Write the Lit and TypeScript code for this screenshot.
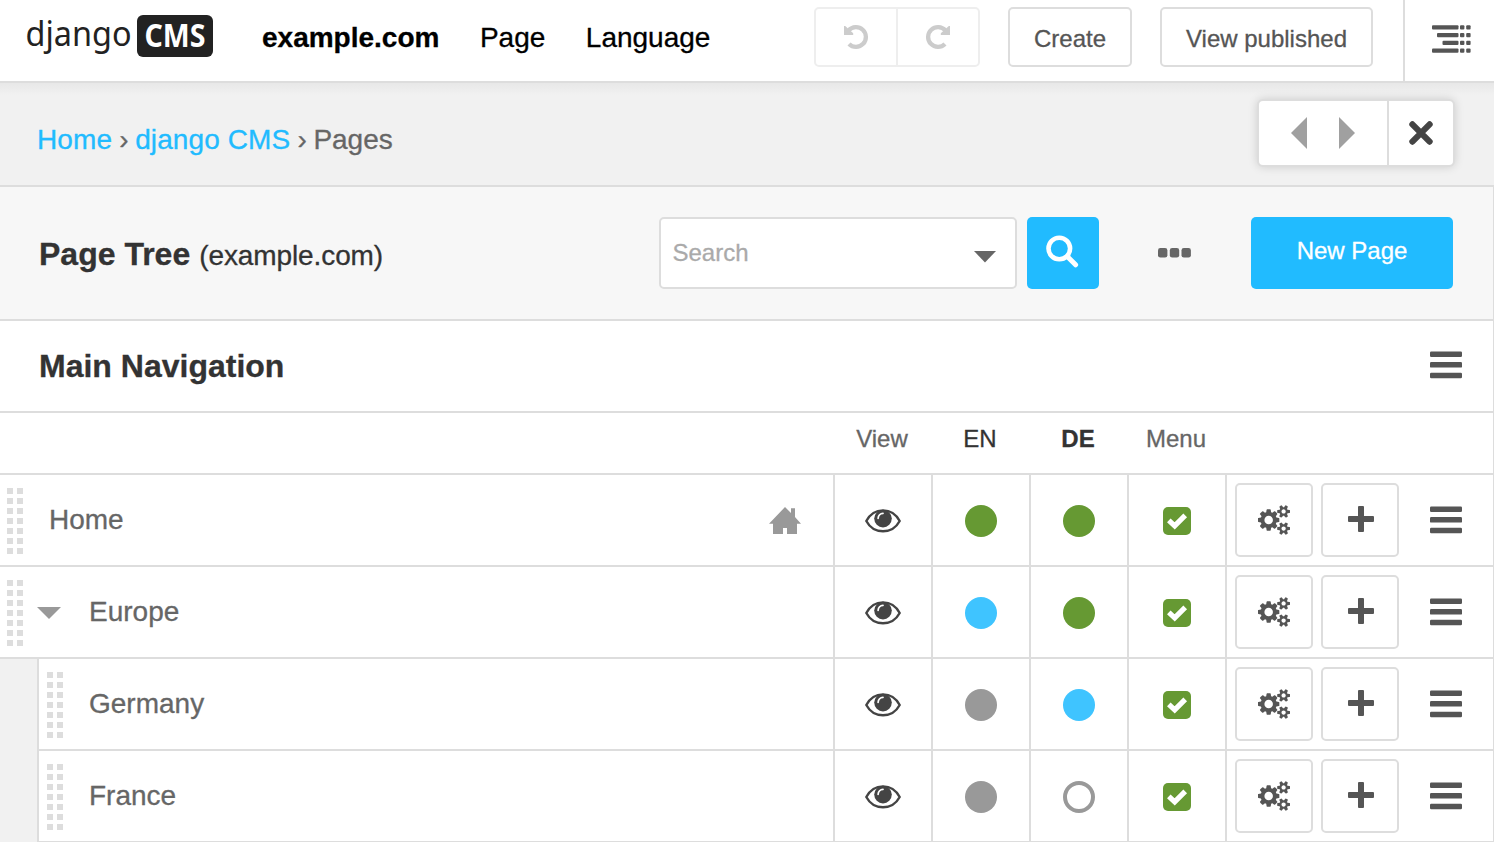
import { LitElement, html, css, svg } from "lit";
import { customElement, property } from "lit/decorators.js";

type Status = "published" | "dirty" | "unpublished" | "empty";

interface PageNode {
  title: string;
  level: number;
  home?: boolean;
  open?: boolean;
  en: Status;
  de: Status;
}

const PAGES: PageNode[] = [
  { title: "Home", level: 0, home: true, en: "published", de: "published" },
  { title: "Europe", level: 0, open: true, en: "dirty", de: "published" },
  { title: "Germany", level: 1, en: "unpublished", de: "dirty" },
  { title: "France", level: 1, en: "unpublished", de: "empty" },
];

const burger = html`<svg class="icon" width="32" height="28" viewBox="0 0 32 28" fill="#555">
  <rect y="0.4" width="32" height="5.6" rx="1.2" /><rect y="11" width="32" height="5.6" rx="1.2" />
  <rect y="21.7" width="32" height="5.6" rx="1.2" />
</svg>`;

const eye = html`<svg class="icon" width="36" height="24" viewBox="0 0 36 24">
  <path d="M1.3 12C5 5.2 11 1.4 18 1.4S31 5.2 34.7 12C31 18.8 25 22.3 18 22.3S5 18.8 1.3 12Z" fill="none" stroke="#444" stroke-width="2.4" stroke-linejoin="round" />
  <circle cx="18" cy="9.6" r="8.8" fill="#444" />
  <path d="M13.1 9.4A5.2 5.2 0 0 1 18 4.4" fill="none" stroke="#fff" stroke-width="1.7" stroke-linecap="round" />
</svg>`;

const house = html`<svg class="icon" width="32" height="28" viewBox="0 0 32 28" fill="#999">
  <path d="M16 0L22 6V1.2H26V10L32 16.8H28V27H18V21H14V27H4V16.8H0Z" />
</svg>`;

const cogs = html`<svg class="icon" width="32" height="30" viewBox="0 0 1920 1792" fill="#555">
  <path d="M896 896q0-106-75-181t-181-75-181 75-75 181 75 181 181 75 181-75 75-181zm768 512q0-52-38-90t-90-38-90 38-38 90q0 53 37.5 90.5t90.5 37.5 90.5-37.5 37.5-90.5zm0-1024q0-52-38-90t-90-38-90 38-38 90q0 53 37.5 90.5t90.5 37.5 90.5-37.5 37.5-90.5zm-384 421v185q0 10-7 19.5t-16 10.5l-155 24q-11 35-32 76 34 48 90 115 7 11 7 20 0 12-7 19-23 30-82.5 89.5t-78.5 59.5q-11 0-21-7l-115-90q-37 19-77 31-11 108-23 155-7 24-30 24h-186q-11 0-20-7.5t-10-17.5l-23-153q-34-10-75-31l-118 89q-7 7-20 7-11 0-21-8-144-133-144-160 0-9 7-19 10-14 41-53t47-61q-23-44-35-82l-152-24q-10-1-17-9.5t-7-19.5v-185q0-10 7-19.5t16-10.5l155-24q11-35 32-76-34-48-90-115-7-11-7-20 0-12 7-20 22-30 82-89t79-59q11 0 21 7l115 90q34-18 77-32 11-108 23-154 7-24 30-24h186q11 0 20 7.5t10 17.5l23 153q34 10 75 31l118-89q8-7 20-7 11 0 21 8 144 133 144 160 0 8-7 19-12 16-42 54t-45 60q23 48 34 82l152 23q10 2 17 10.5t7 19.5zm640 533v140q0 16-149 31-12 27-30 52 51 113 51 138 0 4-4 7-122 71-124 71-8 0-46-47t-52-68q-20 2-30 2t-30-2q-14 21-52 68t-46 47q-2 0-124-71-4-3-4-7 0-25 51-138-18-25-30-52-149-15-149-31v-140q0-16 149-31 13-29 30-52-51-113-51-138 0-4 4-7 4-2 35-20t59-34 30-16q8 0 46 46.5t52 67.5q20-2 30-2t30 2q51-71 92-112l6-2q4 0 124 70 4 3 4 7 0 25-51 138 17 23 30 52 149 15 149 31zm0-1024v140q0 16-149 31-12 27-30 52 51 113 51 138 0 4-4 7-122 71-124 71-8 0-46-47t-52-68q-20 2-30 2t-30-2q-14 21-52 68t-46 47q-2 0-124-71-4-3-4-7 0-25 51-138-18-25-30-52-149-15-149-31v-140q0-16 149-31 13-29 30-52-51-113-51-138 0-4 4-7 4-2 35-20t59-34 30-16q8 0 46 46.5t52 67.5q20-2 30-2t30 2q51-71 92-112l6-2q4 0 124 70 4 3 4 7 0 25-51 138 17 23 30 52 149 15 149 31z" />
</svg>`;

const plus = html`<svg class="icon" width="26" height="26" viewBox="0 0 26 26" fill="#555">
  <rect x="10" width="6" height="26" rx="1" /><rect y="10" width="26" height="6" rx="1" />
</svg>`;

const check = html`<svg class="icon" width="28" height="28" viewBox="0 0 28 28">
  <rect width="28" height="28" rx="5" fill="#693" />
  <path d="M5.8 13.4L11.7 18.9L22.2 8.4" fill="none" stroke="#fff" stroke-width="5.2" />
</svg>`;

const turnPath = svg`<path d="M5.6 6.4A9.9 9.9 0 1 1 6 20" fill="none" stroke="#ccc" stroke-width="4.3" /><path d="M1 2H2.2L10.2 9.2V11H1Z" fill="#ccc" />`;

@customElement("tree-row")
class TreeRow extends LitElement {
  @property({ attribute: false }) page!: PageNode;

  static styles = css`
    :host { display: flex; height: 92px; flex: none; }
    .icon { display: block; flex: none; }
    .indent { width: 37px; flex: none; background: #f1f1f1; border-right: 2px solid #ddd; }
    .row { flex: 1; display: grid; grid-template-columns: 1fr 98px 98px 98px 98px 268px; border-bottom: 2px solid #ddd; background: #fff; }
    .name { display: flex; align-items: center; padding: 0 32px 1px 7px; box-sizing: border-box; }
    .nested .name { padding-left: 8px; }
    .grip { width: 16px; height: 66px; margin-top: 3px; display: grid; grid-template-columns: 6px 6px; grid-auto-rows: 6px; gap: 4px; }
    .dot { background: #ddd; }
    .toggle { width: 26px; flex: none; display: flex; }
    .open .toggle { width: 66px; padding-left: 14px; padding-top: 3px; box-sizing: border-box; }
    .title { flex: 1; color: #666; }
    .house { padding-top: 3px; }
    .cell { border-left: 2px solid #ddd; display: flex; align-items: center; justify-content: center; padding-top: 2px; box-sizing: border-box; }
    .status { width: 32px; height: 32px; border-radius: 50%; box-sizing: border-box; }
    .published { background: #693; }
    .dirty { background: #3fc4ff; }
    .unpublished { background: #999; }
    .empty { border: 4px solid #999; }
    .actions { border-left: 2px solid #ddd; padding-left: 8px; display: flex; align-items: center; gap: 8px; }
    .button { width: 78px; height: 74px; box-sizing: border-box; border: 2px solid #ddd; border-radius: 5px; display: flex; align-items: center; justify-content: center; }
    .add { padding: 0 0 2px 2px; }
    .more { padding-left: 23px; }
  `;

  render() {
    const p = this.page;
    return html`
      ${p.level ? html`<div class="indent"></div>` : null}
      <div class="row ${p.level ? "nested" : ""} ${p.open ? "open" : ""}">
        <div class="name">
          <div class="grip">${Array.from({ length: 14 }, () => html`<i class="dot"></i>`)}</div>
          <span class="toggle">${p.open
            ? html`<svg class="icon" width="24" height="12" viewBox="0 0 24 12"><path d="M0 0H24L12 12Z" fill="#999" /></svg>`
            : null}</span>
          <span class="title">${p.title}</span>
          ${p.home ? html`<span class="house">${house}</span>` : null}
        </div>
        <div class="cell">${eye}</div>
        <div class="cell"><span class="status ${p.en}"></span></div>
        <div class="cell"><span class="status ${p.de}"></span></div>
        <div class="cell">${check}</div>
        <div class="actions">
          <span class="button">${cogs}</span>
          <span class="button add">${plus}</span>
          <span class="more">${burger}</span>
        </div>
      </div>
    `;
  }
}

@customElement("app-root")
class AppRoot extends LitElement {
  static styles = css`
    :host { display: flex; flex-direction: column; width: 1494px; height: 842px; overflow: hidden; background: #fff; font: 28px/1 "Liberation Sans", Arial, sans-serif; color: #333; -webkit-text-stroke: 0.3px currentColor; }
    .icon { display: block; flex: none; }
    .toolbar { height: 83px; flex: none; box-sizing: border-box; display: flex; align-items: flex-start; border-bottom: 2px solid #ddd; background: #fff; }
    .logo { margin: 8px 0 0 20px; width: 200px; display: flex; -webkit-text-stroke: 0; }
    .menu { display: flex; gap: 40.5px; height: 75px; align-items: center; padding-left: 42px; color: #000; flex: 1; }
    .menu b { font-weight: bold; }
    .history { display: flex; width: 166px; height: 60px; box-sizing: border-box; margin-top: 7px; border: 2px solid #eee; border-radius: 5px; }
    .step { flex: 1; display: flex; align-items: center; justify-content: center; }
    .step + .step { border-left: 2px solid #eee; }
    .btn { height: 60px; box-sizing: border-box; margin: 7px 0 0 28px; padding-top: 3px; border: 2px solid #ddd; border-radius: 5px; font-size: 24px; color: #555; display: flex; align-items: center; justify-content: center; }
    .create { width: 124px; }
    .view { width: 213px; }
    .structure { width: 91px; height: 81px; box-sizing: border-box; margin-left: 30px; padding: 25px 0 0 27px; border-left: 2px solid #ddd; }
    .crumbs { height: 104px; flex: none; box-sizing: border-box; display: flex; align-items: center; justify-content: space-between; padding: 0 41px 0 37px; border-bottom: 2px solid #ddd; background: linear-gradient(#e8e8e8, #eaeaea 3px, #f1f1f1 12px); }
    .trail { padding-top: 11px; color: #666; white-space: pre; }
    .link { color: #21bbff; letter-spacing: 0.1px; }
    .sep { letter-spacing: -0.6px; }
    .nav { display: flex; height: 64px; width: 194px; margin-bottom: 2px; background: #fff; border-radius: 4px; box-shadow: 0 0 0 2px #ddd, 0 0 10px 2px rgba(0, 0, 0, 0.15); }
    .arrows { width: 128px; display: flex; align-items: center; justify-content: center; gap: 32px; }
    .close { flex: 1; border-left: 2px solid #ddd; display: flex; align-items: center; justify-content: center; }
    .body { flex: none; border-right: 1px solid #ddd; }
    .head { height: 134px; box-sizing: border-box; display: flex; align-items: center; padding: 0 40px 0 39px; background: #f7f7f7; border-bottom: 2px solid #ddd; }
    .title { flex: 1; padding-top: 2px; display: flex; align-items: baseline; gap: 9px; font-size: 32px; font-weight: bold; }
    .site { font-size: 28px; font-weight: normal; letter-spacing: -0.1px; }
    .search { width: 358px; height: 72px; box-sizing: border-box; border: 2px solid #ddd; border-radius: 5px; background: #fff; display: flex; align-items: center; justify-content: space-between; padding: 0 19px 0 11.5px; color: #aaa; font-size: 24px; }
    .caret { padding-top: 8px; }
    .go { width: 72px; height: 72px; margin-left: 10px; border-radius: 5px; background: #21bbff; display: flex; align-items: center; justify-content: center; box-sizing: border-box; padding: 0 1px 4px 0; }
    .dots { margin: 0 60px 0 59px; }
    .new { width: 202px; height: 72px; box-sizing: border-box; padding-bottom: 4px; border-radius: 5px; background: #21bbff; color: #fff; font-size: 24px; display: flex; align-items: center; justify-content: center; }
    .section { height: 92px; box-sizing: border-box; display: flex; align-items: center; justify-content: space-between; padding: 0 31px 0 39px; border-bottom: 2px solid #ddd; font-size: 32px; font-weight: bold; }
    .options { padding-bottom: 2px; }
    .columns { height: 62px; box-sizing: border-box; display: grid; grid-template-columns: 1fr 98px 98px 98px 98px 268px; align-items: center; padding-bottom: 9px; border-bottom: 2px solid #ddd; font-size: 24px; color: #666; text-align: center; }
    .lang { color: #333; }
    .bold { font-weight: bold; }
  `;

  render() {
    return html`
      <header class="toolbar">
        <div class="logo">
          <svg class="icon" width="200" height="56" viewBox="20 8 200 56" font-family="'Noto Sans', 'Open Sans', sans-serif">
            <text x="25.5" y="46" font-size="34" font-weight="400" fill="#222" textLength="106" lengthAdjust="spacingAndGlyphs">django</text>
            <rect x="137" y="15" width="76" height="42" rx="6" fill="#222" />
            <text x="144.5" y="46.5" font-size="31.5" font-weight="700" fill="#fff" textLength="61" lengthAdjust="spacingAndGlyphs">CMS</text>
          </svg>
        </div>
        <nav class="menu"><b>example.com</b><span>Page</span><span>Language</span></nav>
        <div class="history">
          <span class="step"><svg class="icon" width="26" height="26" viewBox="0 0 26 26">${turnPath}</svg></span>
          <span class="step"><svg class="icon" width="26" height="26" viewBox="0 0 26 26"><g transform="translate(26 0) scale(-1 1)">${turnPath}</g></svg></span>
        </div>
        <span class="btn create">Create</span>
        <span class="btn view">View published</span>
        <div class="structure">
          <svg class="icon" width="39" height="28" viewBox="0 0 39 28" fill="#555">
            ${[0, 5, 10.5, 0].map((x, i) => svg`
              <rect x=${x} y=${0.3 + i * 7.7} width=${26.5 - x} height="4.3" rx="1" />
              <rect x="28" y=${0.3 + i * 7.7} width="4.4" height="4.3" rx="1" />
              <rect x="34.2" y=${0.3 + i * 7.7} width="4.4" height="4.3" rx="1" />`)}
          </svg>
        </div>
      </header>
      <div class="crumbs">
        <div class="trail"><span class="link">Home</span><span class="sep"> › </span><span class="link">django CMS</span><span class="sep"> › </span>Pages</div>
        <div class="nav">
          <span class="arrows">
            <svg class="icon" width="16" height="32" viewBox="0 0 16 32"><path d="M16 0V32L0 16Z" fill="#a0a0a0" /></svg>
            <svg class="icon" width="16" height="32" viewBox="0 0 16 32"><path d="M0 0V32L16 16Z" fill="#a0a0a0" /></svg>
          </span>
          <span class="close">
            <svg class="icon" width="24" height="24" viewBox="0 0 24 24"><path d="M3.4 3.4L20.6 20.6M20.6 3.4L3.4 20.6" stroke="#444" stroke-width="6.2" stroke-linecap="round" /></svg>
          </span>
        </div>
      </div>
      <main class="body">
        <div class="head">
          <div class="title">Page Tree <span class="site">(example.com)</span></div>
          <div class="search">Search
            <span class="caret"><svg class="icon" width="22" height="12" viewBox="0 0 22 12"><path d="M0 0H22L11 11.5Z" fill="#666" /></svg></span>
          </div>
          <div class="go">
            <svg class="icon" width="33" height="33" viewBox="0 0 33 33" fill="none" stroke="#fff"><circle cx="13.3" cy="13.5" r="10.8" stroke-width="4.6" /><path d="M21.3 21.5L29.6 29.8" stroke-width="5" stroke-linecap="round" /></svg>
          </div>
          <svg class="icon dots" width="33" height="10" viewBox="0 0 33 10" fill="#666"><rect width="9.4" height="9.6" rx="2.4" /><rect x="11.8" width="9.4" height="9.6" rx="2.4" /><rect x="23.5" width="9.4" height="9.6" rx="2.4" /></svg>
          <div class="new">New Page</div>
        </div>
        <div class="section">Main Navigation <span class="options">${burger}</span></div>
        <div class="columns">
          <span></span><span>View</span><span class="lang">EN</span><span class="lang bold">DE</span><span>Menu</span><span></span>
        </div>
        ${PAGES.map((page) => html`<tree-row .page=${page}></tree-row>`)}
      </main>
    `;
  }
}
